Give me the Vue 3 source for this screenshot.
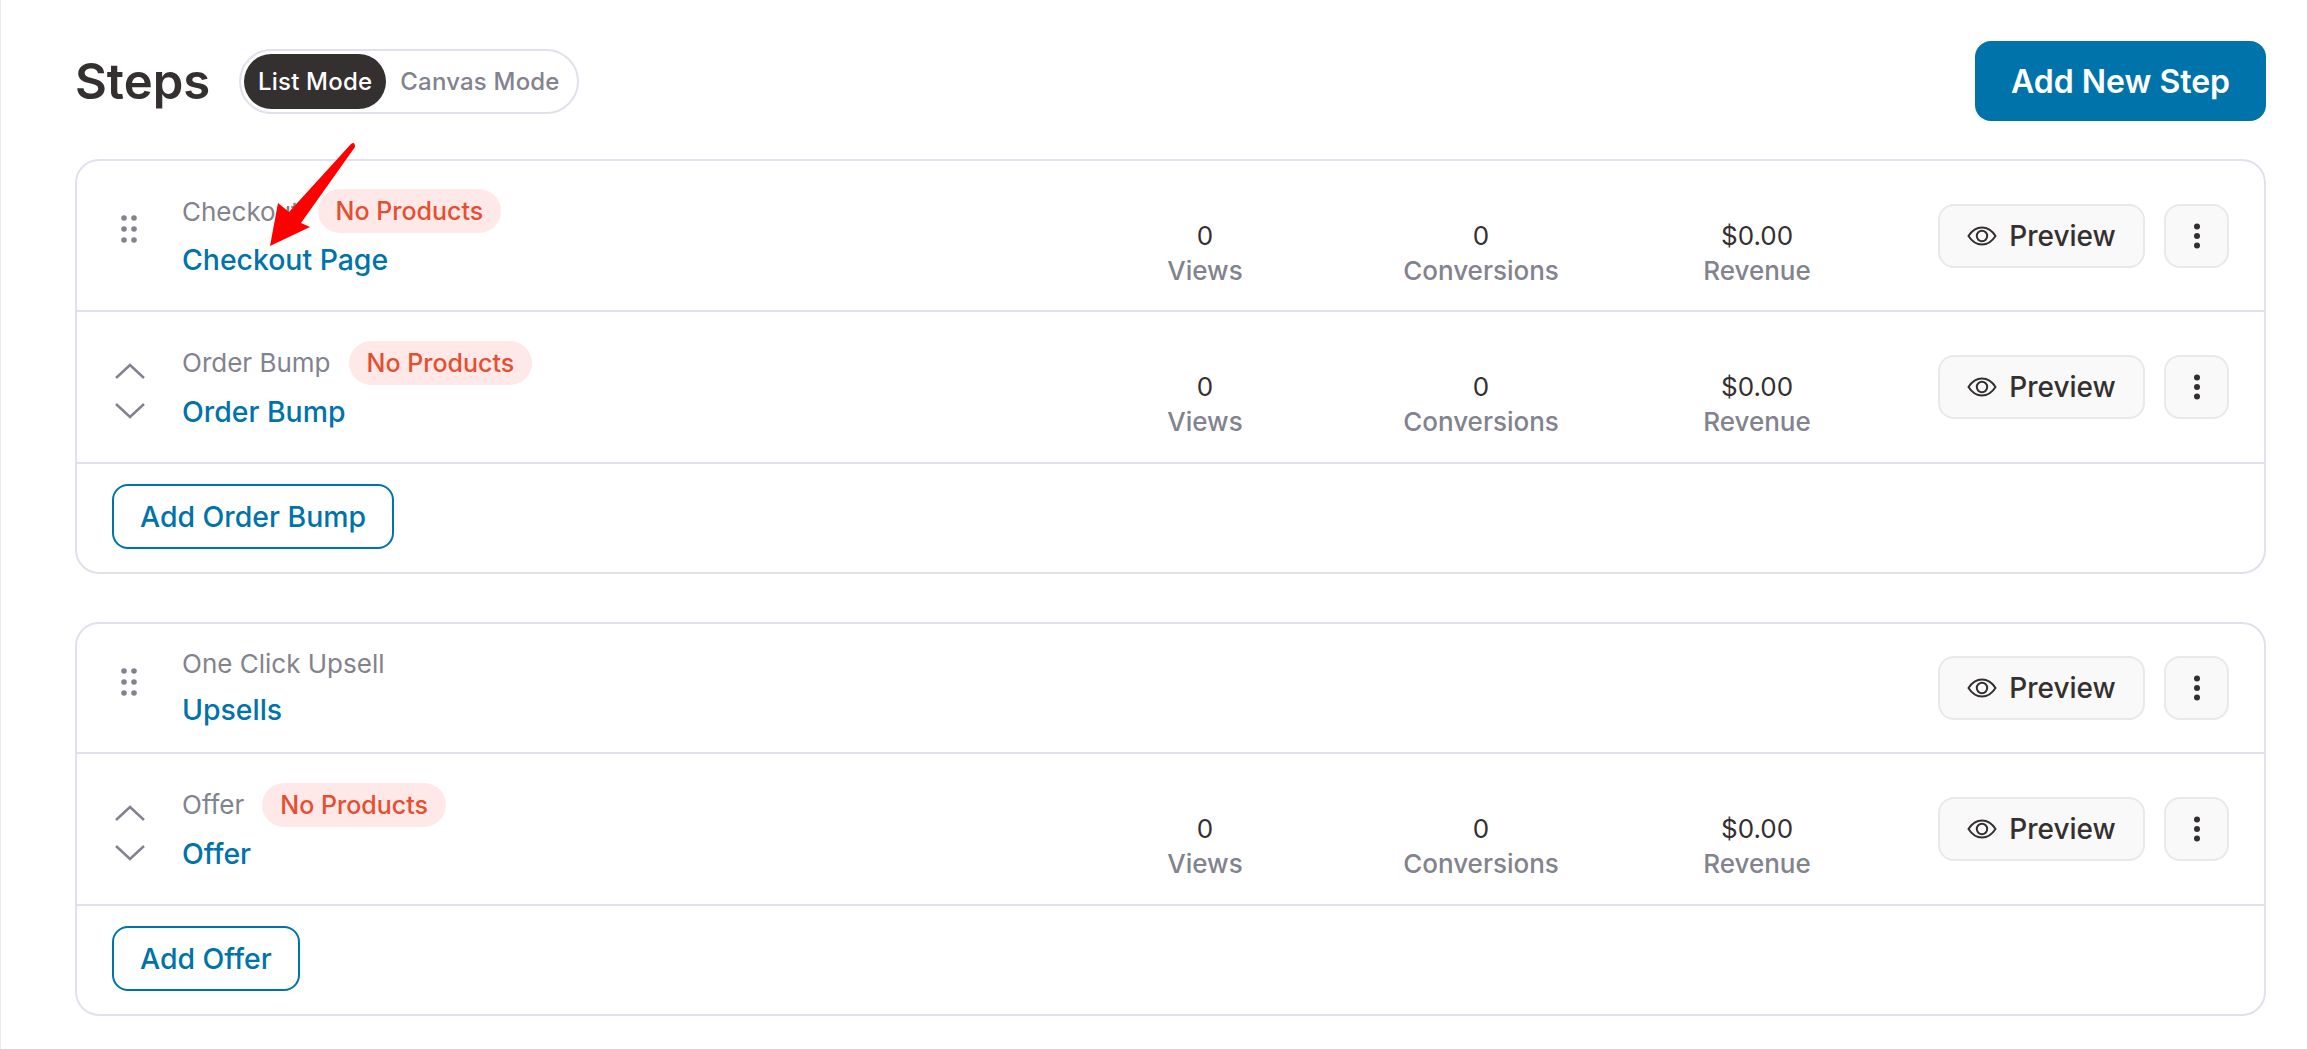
<script setup>
const groups = [
  {
    id: 'checkout',
    addLabel: 'Add Order Bump',
    steps: [
      { id: 'c1', type: 'Checkout', name: 'Checkout Page', badge: true, stats: true, handle: 'drag' },
      { id: 'c2', type: 'Order Bump', name: 'Order Bump', badge: true, stats: true, handle: 'sort' }
    ]
  },
  {
    id: 'upsell',
    addLabel: 'Add Offer',
    steps: [
      { id: 'u1', type: 'One Click Upsell', name: 'Upsells', badge: false, stats: false, handle: 'drag', short: true },
      { id: 'u2', type: 'Offer', name: 'Offer', badge: true, stats: true, handle: 'sort' }
    ]
  }
]

const stats = [
  { value: '0', label: 'Views' },
  { value: '0', label: 'Conversions' },
  { value: '$0.00', label: 'Revenue' }
]
</script>

<template>
  <div class="page">
    <header class="top">
      <div class="top-left">
        <h1 class="title">Steps</h1>
        <div class="toggle">
          <span class="toggle-item active">List Mode</span>
          <span class="toggle-item">Canvas Mode</span>
        </div>
      </div>
      <button class="btn-new">Add New Step</button>
    </header>

    <section v-for="group in groups" :key="group.id" class="card">
      <div
        v-for="step in group.steps"
        :key="step.id"
        class="row"
        :class="{ short: step.short }"
      >
        <div class="handle">
          <svg v-if="step.handle === 'drag'" class="drag" width="16" height="28" viewBox="0 0 16 28">
            <circle cx="3" cy="3" r="2.800" /><circle cx="13" cy="3" r="2.800" />
            <circle cx="3" cy="14" r="2.800" /><circle cx="13" cy="14" r="2.800" />
            <circle cx="3" cy="25" r="2.800" /><circle cx="13" cy="25" r="2.800" />
          </svg>
          <div v-else class="sort">
            <svg width="30" height="16" viewBox="0 0 30 16"><path d="M1 15 15 2l14 13" /></svg>
            <svg width="30" height="16" viewBox="0 0 30 16"><path d="M1 1l14 13L29 1" /></svg>
          </div>
        </div>

        <div class="info">
          <div class="type-line">
            <span class="type">{{ step.type }}</span>
            <span v-if="step.badge" class="badge">No Products</span>
          </div>
          <a class="name">{{ step.name }}</a>
        </div>

        <div class="stats">
          <template v-if="step.stats">
            <div v-for="s in stats" :key="s.label" class="stat">
              <span class="stat-value">{{ s.value }}</span>
              <span class="stat-label">{{ s.label }}</span>
            </div>
          </template>
        </div>

        <div class="actions">
          <button class="btn-preview">
            <svg width="30" height="20" viewBox="0 0 30 20" fill="none">
              <path d="M1.500 10C5 4.500 9.500 1.500 15 1.500S25 4.500 28.500 10C25 15.500 20.500 18.500 15 18.500S5 15.500 1.500 10Z" />
              <circle cx="15" cy="10" r="5.200" />
            </svg>
            Preview
          </button>
          <button class="btn-more">
            <svg width="8" height="26" viewBox="0 0 8 26">
              <circle cx="4" cy="3.500" r="3" /><circle cx="4" cy="13" r="3" /><circle cx="4" cy="22.500" r="3" />
            </svg>
          </button>
        </div>
      </div>
      <div class="card-foot">
        <button class="btn-add">{{ group.addLabel }}</button>
      </div>
    </section>

    <svg class="arrow" width="100" height="115" viewBox="0 0 100 115">
      <path d="M91 9 29 77 18 68 10 111 50 92 41 88 95 12Q95 6 91 9Z" fill="#fe0000" />
    </svg>
  </div>
</template>

<style>
html, body {
  background: #fff;
}
</style>

<style scoped>
.page {
  position: relative;
  box-sizing: border-box;
  width: 2307px;
  height: 1049px;
  padding: 41px 41px 0 74px;
  font-family: Inter, "Liberation Sans", sans-serif;
  color: #353030;
  background: #fff;
  border-left: 1px solid #ececec;
  overflow: hidden;
}

.top {
  display: flex;
  align-items: center;
  justify-content: space-between;
  height: 80px;
  margin-bottom: 38px;
}

.top-left {
  display: flex;
  align-items: center;
  gap: 28px;
}

.title {
  width: 136px;
  margin: 0;
  font-size: 49px;
  font-weight: 600;
  color: #353030;
}

.toggle {
  box-sizing: border-box;
  display: flex;
  align-items: center;
  width: 340px;
  height: 65px;
  padding: 3px;
  border: 2px solid #e1e0ec;
  border-radius: 33px;
}

.toggle-item {
  padding: 0 14px;
  font-size: 24px;
  font-weight: 500;
  letter-spacing: 0.2px;
  line-height: 55px;
  color: #82838e;
}

.toggle-item.active {
  background: #353030;
  color: #fff;
  border-radius: 28px;
}

.btn-new {
  width: 291px;
  height: 80px;
  border: 0;
  border-radius: 16px;
  background: #0073aa;
  color: #fff;
  font: 600 32px Inter, "Liberation Sans", sans-serif;
}

.card {
  box-sizing: border-box;
  margin-bottom: 48px;
  border: 2px solid #e1e0ec;
  border-radius: 24px;
}

.row {
  box-sizing: border-box;
  display: flex;
  align-items: center;
  height: 152px;
  padding-right: 35px;
  border-bottom: 2px solid #e1e0ec;
}

.row:first-child {
  height: 151px;
}

.row.short {
  height: 130px;
}

.handle {
  display: flex;
  justify-content: center;
  flex: none;
  width: 105px;
}

.drag {
  margin: -14px 2px 0 0;
  fill: #82838e;
}

.short .drag {
  margin-top: -12px;
}

.sort {
  display: flex;
  flex-direction: column;
  gap: 24px;
  margin-top: 8px;
}

.sort svg {
  fill: none;
  stroke: #82838e;
  stroke-width: 2.500;
}

.info {
  flex: 1;
}

.type-line {
  display: flex;
  align-items: center;
  gap: 18px;
  min-height: 44px;
}

.short .type-line {
  min-height: 39px;
}

.type {
  font-size: 26px;
  color: #82838e;
}

.badge {
  padding: 0 18px;
  font-size: 25px;
  font-weight: 500;
  line-height: 44px;
  color: #e54f30;
  background: #ffe9e8;
  border-radius: 22px;
}

.name {
  display: block;
  margin-top: 5px;
  font-size: 28.400px;
  font-weight: 500;
  line-height: 44px;
  color: #0073aa;
}

.stats {
  display: flex;
  flex: none;
  width: 828px;
  margin: 34px 43px 0 0;
}

.stat {
  display: flex;
  flex-direction: column;
  align-items: center;
  width: 276px;
}

.stat-value {
  font-size: 26px;
  line-height: 36px;
}

.stat-label {
  font-size: 26px;
  font-weight: 500;
  line-height: 34px;
  color: #82838e;
}

.actions {
  display: flex;
  flex: none;
  gap: 19px;
}

.btn-preview,
.btn-more {
  box-sizing: border-box;
  height: 64px;
  background: #f9f9f9;
  border: 2px solid #e9e9e9;
  border-radius: 16px;
  color: #353030;
}

.btn-preview {
  display: flex;
  align-items: center;
  justify-content: center;
  gap: 12px;
  width: 207px;
  font: 500 28px Inter, "Liberation Sans", sans-serif;
}

.btn-preview svg {
  stroke: #353030;
  stroke-width: 2;
}

.btn-more {
  display: flex;
  align-items: center;
  justify-content: center;
  width: 65px;
  padding: 0;
}

.btn-more svg {
  fill: #353030;
}

.card-foot {
  padding: 20px 35px 23px;
}

.btn-add {
  box-sizing: border-box;
  height: 65px;
  padding: 0 26px;
  background: #fff;
  border: 2px solid #0073aa;
  border-radius: 16px;
  color: #0073aa;
  font: 500 28.400px Inter, "Liberation Sans", sans-serif;
}

/* annotation drawn over the first step */
.arrow {
  position: absolute;
  left: 259px;
  top: 135px;
}
</style>
